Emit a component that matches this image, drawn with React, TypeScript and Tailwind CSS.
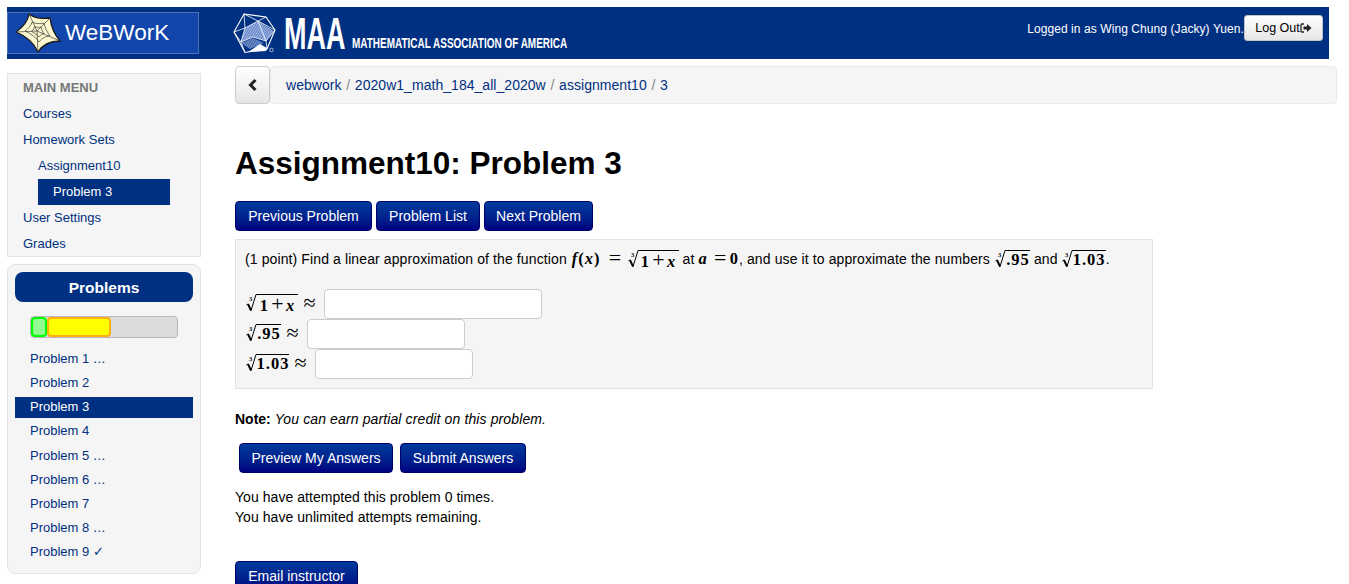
import React, { FC, ReactNode } from 'react'

const problems = [
  'Problem 1 …',
  'Problem 2',
  'Problem 3',
  'Problem 4',
  'Problem 5 …',
  'Problem 6 …',
  'Problem 7',
  'Problem 8 …',
  'Problem 9 ✓',
]

const Btn: FC<{ children: ReactNode; className?: string }> = ({ children, className = '' }) => (
  <button
    className={`h-[30px] rounded-[4px] border border-[#00006a] bg-gradient-to-b from-[#003a9c] to-[#000080] text-white text-[14px] leading-[20px] ${className}`}
  >
    {children}
  </button>
)

// cube root sign, the bar runs over the radicand
const Root: FC<{ children: ReactNode; bar: string; className?: string }> = ({ children, bar, className = '' }) => (
  <span className={`inline-flex items-start align-[-4px] h-[18px] ${className}`}>
    <svg width="11" height="18" viewBox="0 0 11 18" className="shrink-0">
      <path d="M0.5 11 L2 10 L5 16.5 L10 0.5 L11 0.5" fill="none" stroke="#000" strokeWidth="1" />
      <path d="M2 10 L5 16.5" fill="none" stroke="#000" strokeWidth="1.8" />
      <text x="3" y="6.5" fontSize="6.5" fontWeight="700" fontFamily="'Liberation Serif', serif" fill="#000">3</text>
    </svg>
    <span className={`border-t border-black leading-[17px] h-[18px] flex items-baseline justify-center whitespace-nowrap ${bar}`}>{children}</span>
  </span>
)

const M: FC<{ children: ReactNode; className?: string }> = ({ children, className = '' }) => (
  <span className={`font-['Liberation_Serif',serif] font-bold text-[16.5px] tracking-[1px] text-black ${className}`}>{children}</span>
)

const V: FC<{ children: ReactNode }> = ({ children }) => <span className="italic">{children}</span>

// thin maths operator, drawn wider than the letters around it
const Op: FC<{ children: ReactNode; className?: string }> = ({ children, className = '' }) => (
  <span className={`inline-block w-[13px] text-center font-normal text-[22px] leading-[18px] tracking-normal align-[-1px] ${className}`}>{children}</span>
)

const OnePlusX: FC = () => (
  <>
    1<Op className="mx-[2px]">+</Op>
    <V>x</V>
  </>
)

const AnswerRow: FC<{ math: ReactNode; bar: string; width: string }> = ({ math, bar, width }) => (
  <div className="flex items-center h-[30px]">
    <M className="ml-px -mt-[2px] flex">
      <Root bar={bar}>{math}</Root>
    </M>
    <M className="ml-[5px] -mt-[2px] flex">
      <Op>≈</Op>
    </M>
    <input className={`h-[30px] ml-[8px] ${width} bg-white border border-[#cccccc] rounded-[4px]`} />
  </div>
)

const Star: FC = () => (
  <svg width="48" height="40" viewBox="0 0 48 40" className="shrink-0">
    <path
      d="M15 1 C20 5 28 6 36 5 C37 13 40 21 46 28 C37 28 29 31 24 39 C20 30 12 23 2 19 C9 14 14 8 15 1 Z"
      fill="#fdf8d0"
      stroke="#1a1a1a"
      strokeWidth="1.3"
    />
    <g fill="none" stroke="#3a3a3a" strokeWidth="0.7">
      <path d="M23 18 L15 1 M23 18 L36 5 M23 18 L46 28 M23 18 L24 39 M23 18 L2 19" />
      <path d="M18 9 C22 11 26 11 30 10 C31 15 33 19 36 23 C32 23 28 25 25 29 C22 24 17 21 11 18 C14 16 17 13 18 9 Z" />
      <path d="M20.5 13.5 C22.5 14.5 25 14.5 27 14 C27.5 16.5 28.5 18.5 30 21 C28 21 26.5 22 25 24 C23 21.5 20.5 20 17.5 18.5 C19 17 20 15.5 20.5 13.5 Z" />
    </g>
  </svg>
)

const Poly: FC = () => (
  <svg width="44" height="41" viewBox="0 0 44 41" className="shrink-0">
    <defs>
      <pattern id="hatch" width="2" height="2" patternUnits="userSpaceOnUse" patternTransform="rotate(30)">
        <rect width="2" height="2" fill="#5d7fc4" />
        <rect width="1" height="2" fill="#a4b8e2" />
      </pattern>
    </defs>
    <path d="M12 15 L25 8 L41 18 L33 28 L20 24 L8 29 Z" fill="url(#hatch)" />
    <path d="M8 30 L20 25 L31 30 L17 36 Z" fill="url(#hatch)" opacity="0.7" />
    <path d="M15 39 L27 31 L34 35 L33 38 Z" fill="#fff" />
    <path d="M11 1 L33 4 L42 17 L34 36 L12 39.5 L1 19 Z" fill="none" stroke="#fff" strokeWidth="1.1" />
    <path d="M11 1 L12 15 L1 19 M11 1 L25 8 L33 4 M12 15 L25 8 L42 17 M12 15 L8 29 L12 39.5 M1 19 L8 29 L20 24 L33 28 L42 17 M25 8 L33 28 L34 36" fill="none" stroke="#fff" strokeWidth="0.8" />
    <circle cx="38.5" cy="37" r="1.8" fill="none" stroke="#fff" strokeWidth="0.6" />
  </svg>
)

const App: FC = () => {
  return (
    <div className="w-[1349px] h-[584px] overflow-hidden bg-white text-black font-['Liberation_Sans',Arial,sans-serif] text-[14px] leading-[20px]">
      <div className="pt-[7px] pl-[7px]">
        <header className="w-[1322px] h-[52px] bg-[#003082] flex items-center text-white">
          <div className="w-[192px] h-[42px] bg-[#1246aa] border border-[#4d72bb] flex items-center pl-[6px] gap-[3px]">
            <Star />
            <span className="text-[22.5px] leading-[30px]">WeBWorK</span>
          </div>
          <div className="ml-[34px] flex items-center">
            <Poly />
            <span className="ml-[7px] font-bold text-[45px] leading-[45px] w-[61px] scale-x-[0.6] origin-left whitespace-nowrap">MAA</span>
            <span className="ml-[7px] mt-[20px] w-[215px] font-bold text-[15px] leading-[16px] scale-x-[0.665] origin-left whitespace-nowrap">MATHEMATICAL ASSOCIATION OF AMERICA</span>
          </div>
          <div className="ml-auto flex items-center pr-[6px] -mt-[10px]">
            <span className="text-[12px] mt-[2px] tracking-[0.08px]">Logged in as Wing Chung (Jacky) Yuen.</span>
            <button className="w-[79px] h-[26px] bg-gradient-to-b from-white to-[#e6e6e6] border border-[#c4c4c4] rounded-[3px] text-[12.5px] text-black flex items-center justify-center">
              Log Out
              <svg width="12" height="10" viewBox="0 0 12 10">
                <path d="M4 1 H2 Q1 1 1 2 V8 Q1 9 2 9 H4" fill="none" stroke="#222" strokeWidth="1.3" />
                <path d="M3.5 3.5 H7 V1 L11.5 5 L7 9 V6.5 H3.5 Z" fill="#222" />
              </svg>
            </button>
          </div>
        </header>
        <div className="flex items-start">
          <aside className="w-[194px] shrink-0 mt-[14px] text-[13px]">
            <nav className="h-[184px] bg-[#f5f5f5] border border-[#e3e3e3] pt-px text-[#00307f]">
              <div className="h-[26px] pl-[15px] flex items-center font-bold text-[#777777]">MAIN MENU</div>
              <div className="h-[26px] pl-[15px] flex items-center">Courses</div>
              <div className="h-[26px] pl-[15px] flex items-center">Homework Sets</div>
              <div className="h-[26px] pl-[30px] flex items-center">Assignment10</div>
              <div className="h-[26px] ml-[30px] w-[132px] pl-[15px] flex items-center bg-[#003082] text-white">Problem 3</div>
              <div className="h-[26px] pl-[15px] flex items-center">User Settings</div>
              <div className="h-[26px] pl-[15px] flex items-center">Grades</div>
            </nav>
            <section className="mt-[7px] h-[310px] bg-[#f5f5f5] border border-[#e3e3e3] rounded-[8px] pt-[7px] px-[7px]">
              <div className="h-[30px] pt-px rounded-[8px] bg-[#003082] text-white font-bold text-[15.5px] flex items-center justify-center">Problems</div>
              <div className="mt-[14px] mx-[15px] h-[22px] flex items-center bg-[#dcdcdc] border border-[#b8b8b8] rounded-[4px]">
                <div className="w-[16px] h-[20px] bg-[#90ff90] border-2 border-[#00ff00] rounded-[4px]" />
                <div className="w-[64px] h-[20px] bg-[#ffff00] border-2 border-[#ffb010] rounded-[4px]" />
              </div>
              <ul className="mt-[9px] text-[#00307f]">
                {problems.map((p) => (
                  <li key={p} className="h-[24.15px] flex items-center">
                    <span className={`w-full h-[21px] pl-[15px] flex items-center ${p === 'Problem 3' ? 'bg-[#003082] text-white' : ''}`}>
                      {p}
                    </span>
                  </li>
                ))}
              </ul>
            </section>
          </aside>
          <main className="ml-[34px] w-[1102px] shrink-0 mt-[7px]">
            <div className="flex h-[38px]">
              <button className="w-[35px] h-[38px] shrink-0 bg-gradient-to-b from-white to-[#e6e6e6] border border-[#cccccc] rounded-[4px] flex items-center justify-center">
                <svg width="10" height="14" viewBox="0 0 10 14">
                  <path d="M7.5 2 L2.5 7 L7.5 12" fill="none" stroke="#222" strokeWidth="3" />
                </svg>
              </button>
              <div className="flex-1 bg-[#f5f5f5] border border-[#eaeaea] rounded-[4px] pl-[15px] flex items-center gap-[4.7px] tracking-[0.04px] text-[#00307f]">
                <span>webwork</span>
                <span className="text-[#888]">/</span>
                <span>2020w1_math_184_all_2020w</span>
                <span className="text-[#888]">/</span>
                <span>assignment10</span>
                <span className="text-[#888]">/</span>
                <span>3</span>
              </div>
            </div>
            <h1 className="mt-[41px] text-[31.5px] leading-[36px] font-bold">Assignment10: Problem 3</h1>
            <div className="mt-[20px] flex gap-[4px]">
              <Btn className="w-[137px]">Previous Problem</Btn>
              <Btn className="w-[104px]">Problem List</Btn>
              <Btn className="w-[109px]">Next Problem</Btn>
            </div>
            <div className="mt-[8px] w-[918px] h-[150px] bg-[#f5f5f5] border border-[#e3e3e3] pl-[9px] pt-[6px]">
              <p className="h-[26px] leading-[26px] whitespace-nowrap tracking-[0.11px]">
                (1 point) Find a linear approximation of the function{' '}
                <M className="ml-[1px]"><V>f</V>(<V>x</V>)<Op className="ml-[8px]">=</Op></M>
                <M className="ml-[6px]"><Root bar="w-[40px]"><OnePlusX /></Root></M>{' '}
                at{' '}
                <M><V>a</V><Op className="ml-[6px] mr-[3px]">=</Op>0</M>, and use it to approximate the numbers{' '}
                <M className="ml-[1px]"><Root bar="w-[24px]">.95</Root></M>{' '}
                and{' '}
                <M><Root bar="w-[33px]">1.03</Root></M>.
              </p>
              <div className="mt-[17px]">
                <AnswerRow math={<OnePlusX />} bar="w-[41px]" width="w-[218px]" />
                <AnswerRow math=".95" bar="w-[24px]" width="w-[158px]" />
                <AnswerRow math="1.03" bar="w-[32px]" width="w-[158px]" />
              </div>
            </div>
            <p className="mt-[20px]">
              <b>Note:</b> <i className="tracking-[0.12px]">You can earn partial credit on this problem.</i>
            </p>
            <div className="mt-[14px] ml-[4px] flex gap-[7px]">
              <Btn className="w-[154px]">Preview My Answers</Btn>
              <Btn className="w-[126px]">Submit Answers</Btn>
            </div>
            <p className="mt-[14px] tracking-[0.05px]">You have attempted this problem 0 times.</p>
            <p className="tracking-[0.05px]">You have unlimited attempts remaining.</p>
            <Btn className="mt-[34px] w-[123px]">Email instructor</Btn>
          </main>
        </div>
      </div>
    </div>
  )
}

export default App
